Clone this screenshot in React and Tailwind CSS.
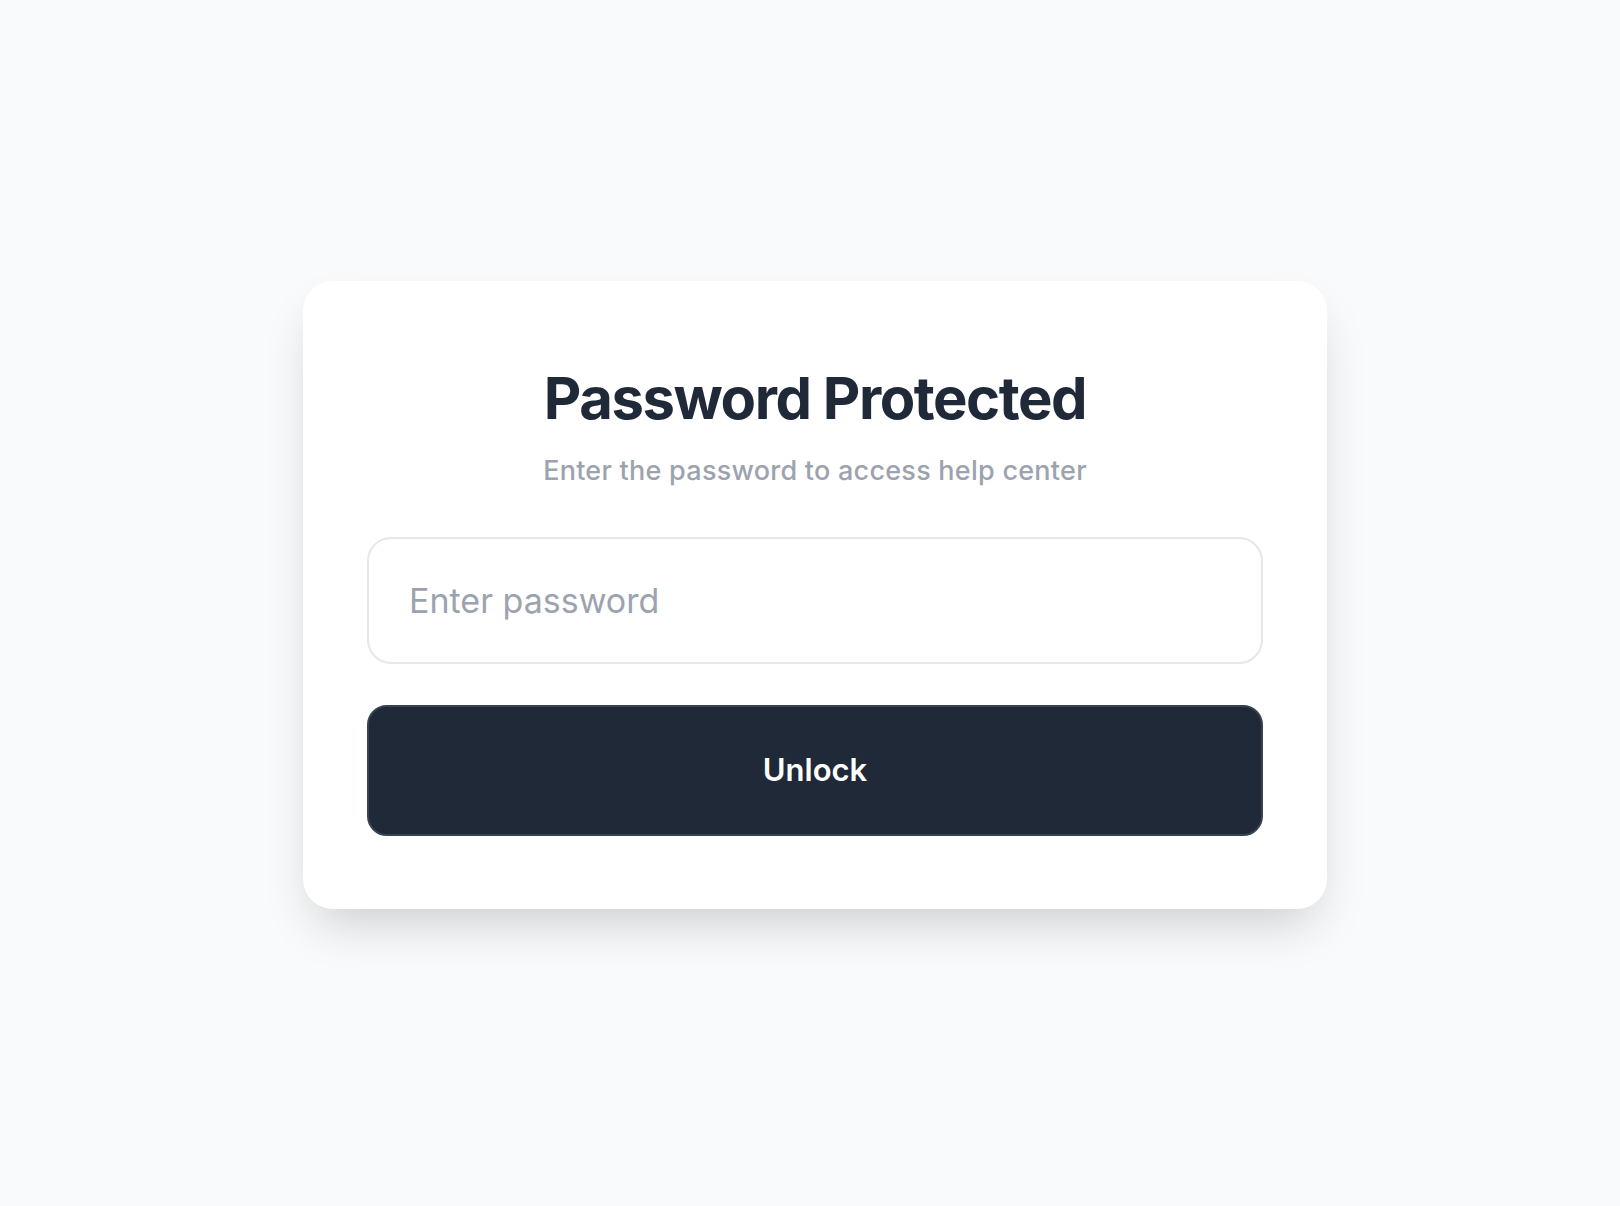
import { useState } from 'react'

export default function App() {
  const [password, setPassword] = useState('')

  return (
    <div
      className="min-h-screen bg-[#f9fafb] flex items-center justify-center pl-[10px] pb-[16px]"
      style={{ fontFamily: 'Inter, "Noto Sans", sans-serif' }}
    >
      {/* Card */}
      <div className="w-[1024px] bg-white rounded-[30px] shadow-[0_25px_50px_-12px_rgba(0,0,0,0.18)] px-16 pt-[88px] pb-[73px]">
        <h1 className="text-center text-[58px] leading-none font-bold text-[#1f2937] tracking-[-0.025em]">
          Password Protected
        </h1>
        <p className="mt-[30px] text-center text-[27px] leading-none font-medium text-[#9ca3af] tracking-[0.25px]">
          Enter the password to access help center
        </p>

        <form className="mt-[53px]" onSubmit={e => e.preventDefault()}>
          <input
            type="password"
            value={password}
            onChange={e => setPassword(e.target.value)}
            placeholder="Enter password"
            className="block w-full h-[127px] px-10 rounded-[24px] border-2 border-[#e5e7eb] bg-white text-[34px] text-[#1f2937] placeholder:text-[#9ca3af] outline-none"
          />
          <button
            type="submit"
            className="mt-[41px] w-full h-[131px] rounded-[20px] border-2 border-[#374151] bg-[#1f2937] text-white text-[31px] font-semibold"
          >
            Unlock
          </button>
        </form>
      </div>
    </div>
  )
}
